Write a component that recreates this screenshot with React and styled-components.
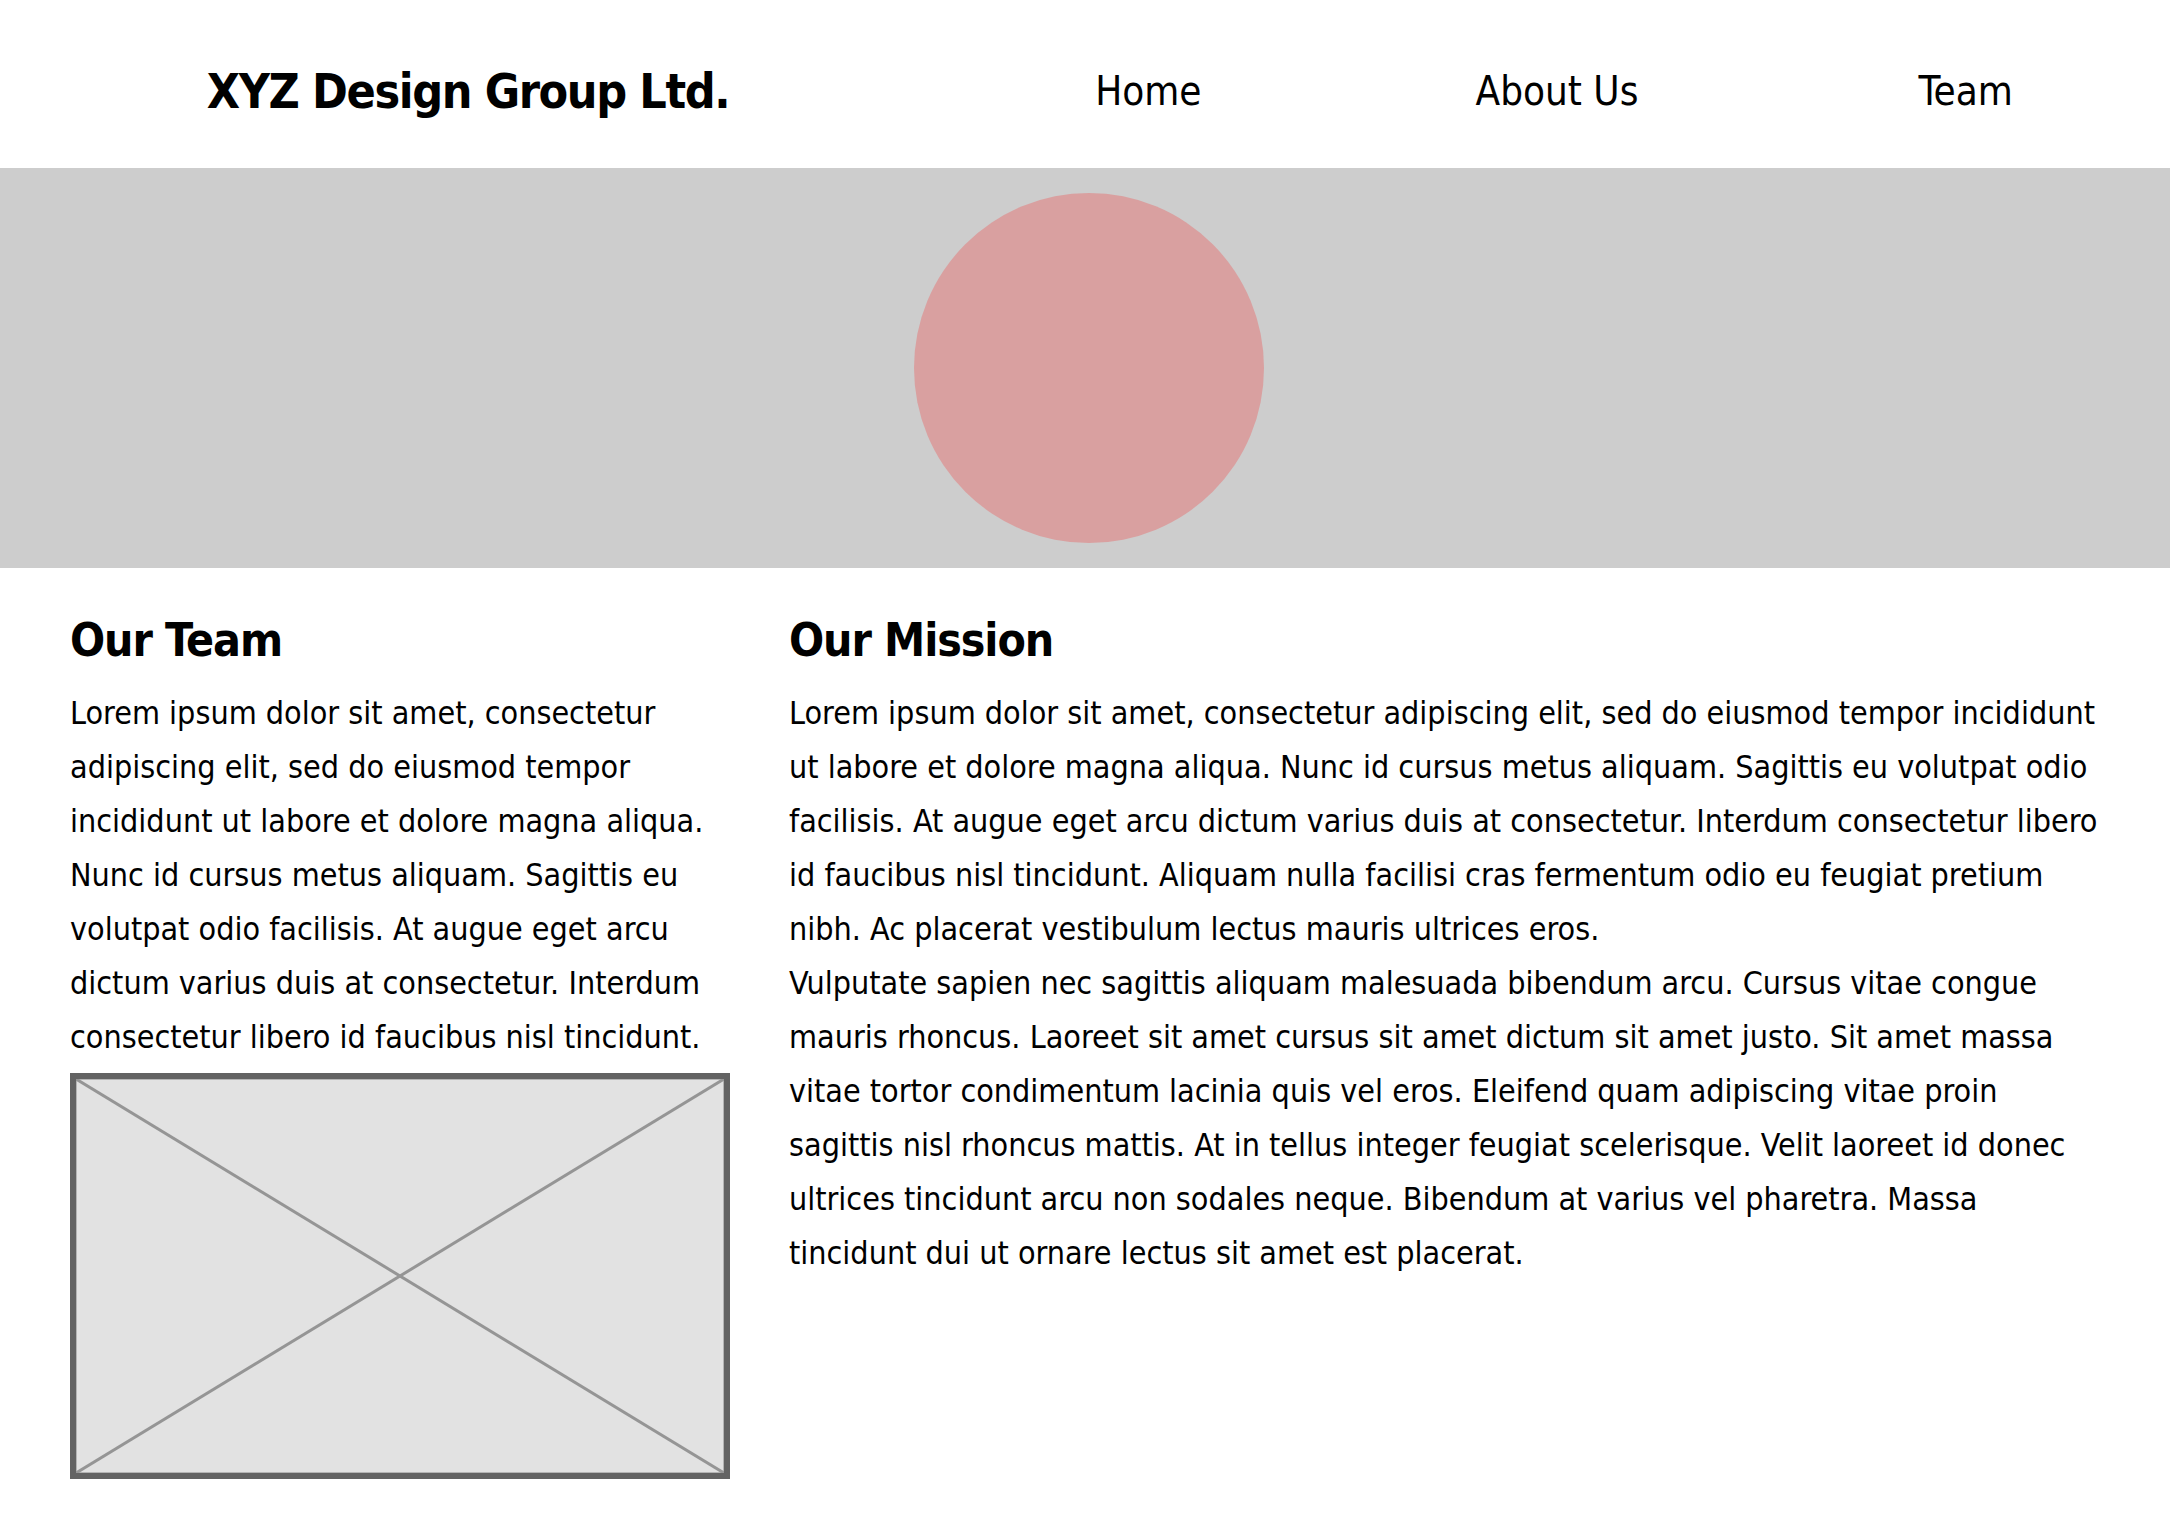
import styled, { createGlobalStyle } from "styled-components";

const GlobalStyle = createGlobalStyle`
  html, body {
    margin: 0;
    padding: 0;
    background: #ffffff;
  }
  body {
    font-family: "DejaVu Sans Condensed", "DejaVu Sans", sans-serif;
    color: #000000;
  }
`;

const Header = styled.header`
  display: grid;
  grid-template-columns: 944px repeat(3, 1fr);
  align-items: start;
  height: 168px;
  box-sizing: border-box;
  padding-top: 67px;
`;

const Logo = styled.h1`
  margin: 0;
  padding-right: 8px;
  font-size: 48px;
  font-weight: 700;
  line-height: 1;
  letter-spacing: -1.4px;
  text-align: center;
  white-space: nowrap;
`;

const NavItem = styled.a`
  margin-top: 4px;
  font-size: 40px;
  line-height: 1;
  text-align: center;
  color: #000000;
  text-decoration: none;
  cursor: pointer;
`;

const Hero = styled.section`
  display: flex;
  justify-content: center;
  align-items: center;
  height: 400px;
  background: #cdcdcd;
`;

const Circle = styled.div`
  width: 350px;
  height: 350px;
  margin-left: 8px;
  border-radius: 50%;
  background: #d9a0a0;
`;

const Content = styled.main`
  display: grid;
  grid-template-columns: 660px 1fr;
  column-gap: 59px;
  padding: 45px 66px 0 70px;
`;

const Column = styled.div`
  display: flex;
  flex-direction: column;
`;

const Heading = styled.h2`
  margin: 0 0 18px 0;
  font-size: 46px;
  font-weight: 700;
  line-height: 1.2;
  letter-spacing: -1.1px;
`;

const Text = styled.p`
  margin: 0;
  font-size: 32px;
  line-height: 54px;
`;

const Placeholder = styled.div`
  margin-top: 9px;
  width: 660px;
  height: 406px;
  box-sizing: border-box;
  border: 6px solid #636363;
  background: #e2e2e2;
  box-shadow: inset 0 0 0 1px #b4b4b4;
  svg {
    display: block;
    width: 100%;
    height: 100%;
  }
`;

const navLinks = ["Home", "About Us", "Team"];

const App = () => {
  return (
    <>
      <GlobalStyle />
      <Header>
        <Logo>XYZ Design Group Ltd.</Logo>
        {navLinks.map((item) => (
          <NavItem key={item}>{item}</NavItem>
        ))}
      </Header>
      <Hero>
        <Circle />
      </Hero>
      <Content>
        <Column>
          <Heading>Our Team</Heading>
          <Text>
            Lorem ipsum dolor sit amet, consectetur adipiscing elit, sed do
            eiusmod tempor incididunt ut labore et dolore magna aliqua. Nunc id
            cursus metus aliquam. Sagittis eu volutpat odio facilisis. At augue
            eget arcu dictum varius duis at consectetur. Interdum consectetur
            libero id faucibus nisl tincidunt.
          </Text>
          <Placeholder>
            <svg viewBox="0 0 100 100" preserveAspectRatio="none">
              <line x1="0" y1="0" x2="100" y2="100" stroke="#959595" strokeWidth="3" vectorEffect="non-scaling-stroke" />
              <line x1="100" y1="0" x2="0" y2="100" stroke="#959595" strokeWidth="3" vectorEffect="non-scaling-stroke" />
            </svg>
          </Placeholder>
        </Column>
        <Column>
          <Heading>Our Mission</Heading>
          <Text>
            Lorem ipsum dolor sit amet, consectetur adipiscing elit, sed do
            eiusmod tempor incididunt ut labore et dolore magna aliqua. Nunc id
            cursus metus aliquam. Sagittis eu volutpat odio facilisis. At augue
            eget arcu dictum varius duis at consectetur. Interdum consectetur
            libero id faucibus nisl tincidunt. Aliquam nulla facilisi cras
            fermentum odio eu feugiat pretium nibh. Ac placerat vestibulum
            lectus mauris ultrices eros.
          </Text>
          <Text>
            Vulputate sapien nec sagittis aliquam malesuada bibendum arcu.
            Cursus vitae congue mauris rhoncus. Laoreet sit amet cursus sit amet
            dictum sit amet justo. Sit amet massa vitae tortor condimentum
            lacinia quis vel eros. Eleifend quam adipiscing vitae proin sagittis
            nisl rhoncus mattis. At in tellus integer feugiat scelerisque. Velit
            laoreet id donec ultrices tincidunt arcu non sodales neque. Bibendum
            at varius vel pharetra. Massa tincidunt dui ut ornare lectus sit
            amet est placerat.
          </Text>
        </Column>
      </Content>
    </>
  );
};

export default App;
